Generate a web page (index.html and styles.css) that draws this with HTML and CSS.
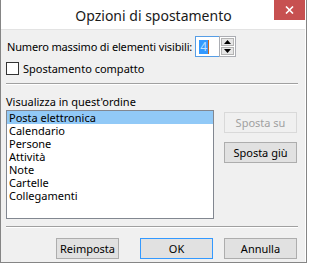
FILE: index.html
```html
<!DOCTYPE html>
<html lang="it">
<head>
    <meta charset="UTF-8">
    <title>Opzioni di spostamento</title>
    <link rel="stylesheet" href="styles.css">
</head>
<body>
    <div class="window">
        <div class="titlebar">
            <span></span>
            <span class="title">Opzioni di spostamento</span>
            <span class="close-cell">
                <span class="close-btn">
                    <svg width="9" height="8" viewBox="0 0 9 8"><path d="M1 0.5 L8 7.5 M8 0.5 L1 7.5" stroke="#fff" stroke-width="1.6"/></svg>
                </span>
            </span>
        </div>
        <div class="panel">
            <div class="row-max">
                <label class="max-label">Numero massimo di elementi visibili:</label>
                <div class="spin">
                    <div class="spin-input"><span class="sel">4</span><span class="caret"></span></div>
                    <div class="spin-btns">
                        <span class="spin-btn"><svg width="7" height="4" viewBox="0 0 7 4"><path d="M0 4 L3.5 0 L7 4 Z" fill="#000"/></svg></span>
                        <span class="spin-btn"><svg width="7" height="4" viewBox="0 0 7 4"><path d="M0 0 L3.5 4 L7 0 Z" fill="#000"/></svg></span>
                    </div>
                </div>
            </div>
            <div class="row-check">
                <span class="checkbox"></span>
                <label>Spostamento compatto</label>
            </div>
            <div class="sep sep-top"></div>
            <div class="order-label">Visualizza in quest'ordine</div>
            <div class="order-area">
                <ul class="listbox">
                    <li class="selected">Posta elettronica</li>
                    <li>Calendario</li>
                    <li>Persone</li>
                    <li>Attività</li>
                    <li>Note</li>
                    <li>Cartelle</li>
                    <li>Collegamenti</li>
                </ul>
                <div class="side-btns">
                    <button class="btn" disabled>Sposta su</button>
                    <button class="btn">Sposta giù</button>
                </div>
            </div>
            <div class="sep sep-bottom"></div>
            <div class="footer">
                <button class="btn btn-reset">Reimposta</button>
                <button class="btn btn-default">OK</button>
                <button class="btn">Annulla</button>
            </div>
        </div>
    </div>
</body>
</html>
```

FILE: styles.css
```css
body {
    margin: 0;
    background: #fff;
    font-family: "Noto Sans", sans-serif;
    font-size: 11px;
    color: #000;
}
.window {
    width: 307px;
    height: 263px;
    box-sizing: border-box;
    border: 1px solid #858585;
    border-top: none;
    background: #fff;
    display: flex;
    flex-direction: column;
}
.titlebar {
    height: 29px;
    display: grid;
    grid-template-columns: 1fr auto 1fr;
}
.title {
    font-size: 14px;
    line-height: 29px;
    color: #1a1a1a;
    padding-top: 1px;
}
.close-cell {
    display: flex;
    justify-content: flex-end;
    align-items: flex-start;
    padding-right: 1px;
}
.close-btn {
    width: 31px;
    height: 20px;
    background: #c75050;
    display: flex;
    align-items: center;
    justify-content: center;
}
.panel {
    flex: 1;
    background: #f0f0f0;
    margin-right: 1px;
    border-top: 1px solid #e3e3e3;
    padding: 6px 7px 0 5px;
    display: flex;
    flex-direction: column;
}
.row-max {
    display: flex;
    align-items: center;
    height: 21px;
    padding-left: 1px;
}
.max-label {
    letter-spacing: -0.15px;
}
.spin {
    display: flex;
    margin-left: 3px;
    height: 21px;
}
.spin-input {
    width: 24px;
    box-sizing: border-box;
    border: 1px solid #569de5;
    border-right: none;
    background: #fff;
    display: flex;
    align-items: center;
    padding-left: 3px;
}
.sel {
    background: #3399ff;
    color: #bfe0ff;
    font-size: 12px;
    line-height: 14px;
    padding: 0 1px;
}
.caret {
    width: 1px;
    height: 14px;
    background: #c8641e;
}
.spin-btns {
    width: 17px;
    box-sizing: border-box;
    border: 1px solid #abadb3;
    background: #fff;
    display: flex;
    flex-direction: column;
    padding: 1px;
    gap: 1px;
}
.spin-btn {
    flex: 1;
    background: #e6e6e6;
    border: 1px solid #b4b4b4;
    display: flex;
    align-items: center;
    justify-content: center;
}
.row-check {
    display: flex;
    align-items: center;
    margin-top: 5px;
    height: 13px;
}
.checkbox {
    width: 11px;
    height: 11px;
    border: 1px solid #333;
    background: #fff;
    margin-right: 4px;
}
.sep {
    height: 1px;
    background: #a0a0a0;
    border-bottom: 1px solid #fff;
}
.sep-top {
    margin-top: 8px;
}
.order-label {
    margin-top: 9px;
    line-height: 16px;
}
.order-area {
    display: flex;
}
.listbox {
    list-style: none;
    margin: 0;
    padding: 0;
    width: 208px;
    height: 109px;
    box-sizing: border-box;
    border: 1px solid #828790;
    background: #fff;
}
.listbox li {
    line-height: 13px;
    padding: 0 2px;
}
.listbox li.selected {
    background: #91c9f7;
}
.side-btns {
    margin-left: 10px;
    padding-top: 2px;
    display: flex;
    flex-direction: column;
    gap: 9px;
}
.btn {
    font-family: inherit;
    font-size: 11px;
    color: #000;
    width: 73px;
    height: 21px;
    padding: 0;
    background: #e1e1e1;
    border: 1px solid #adadad;
    border-radius: 0;
}
.btn:disabled {
    background: #f0f0f0;
    border-color: #d9d9d9;
    color: #a0a0a0;
}
.btn-default {
    border-color: #3399ff;
}
.btn-reset {
    width: 63px;
    margin-right: 10px;
}
.sep-bottom {
    margin-top: 7px;
}
.footer {
    display: flex;
    justify-content: flex-end;
    gap: 11px;
    margin-top: 10px;
    padding-right: 1px;
}
```
